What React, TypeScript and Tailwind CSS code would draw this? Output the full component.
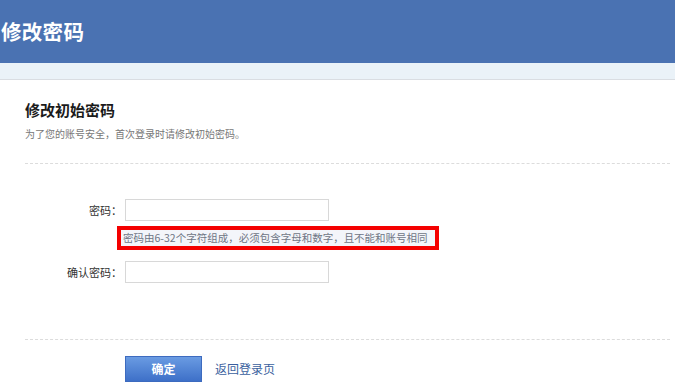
import React from "react";

const font = { fontFamily: '"Noto Sans CJK SC", "Noto Sans", sans-serif' };

export default function App() {
  return (
    <div className="w-[675px] h-[390px] overflow-hidden bg-white flex flex-col" style={font}>
      <div className="h-[63px] shrink-0 bg-[#4a72b2] flex items-center">
        <h1 className="text-[20.5px] font-bold text-white leading-none ml-[1px] tracking-[0.3px]">修改密码</h1>
      </div>
      <div className="h-[17px] shrink-0 bg-[#eaf2f8] border-b border-[#d9dde2]" />
      <div className="flex flex-col pl-[25px] pr-[5px]">
        <h2 className="mt-[20px] h-[20px] leading-[20px] text-[15px] font-bold text-[#1a1a1a]">修改初始密码</h2>
        <p className="mt-[6px] h-[16px] leading-[16px] text-[10px] text-[#777]">为了您的账号安全，首次登录时请修改初始密码。</p>
        <div className="mt-[21px] border-t border-dashed border-[#dcdcdc]" />
        <div className="mt-[35px] flex items-center">
          <label className="w-[100px] pr-[3px] text-right text-[11px] text-[#333]">密码：</label>
          <input type="password" className="w-[204px] h-[22px] border border-[#d8d8d8] outline-none" />
        </div>
        <div className="mt-[5px] ml-[92px] w-[322px] h-[24px] border-[4px] border-[#f40000] bg-[#f3f5fa] flex items-center pl-[2px]">
          <span className="text-[10.5px] text-[#6f7585] whitespace-nowrap leading-none">密码由6-32个字符组成，必须包含字母和数字，且不能和账号相同</span>
        </div>
        <div className="mt-[11px] flex items-center">
          <label className="w-[100px] pr-[3px] text-right text-[11px] text-[#333]">确认密码：</label>
          <input type="password" className="w-[204px] h-[22px] border border-[#d8d8d8] outline-none" />
        </div>
        <div className="mt-[56px] border-t border-dashed border-[#dcdcdc]" />
        <div className="mt-[16px] flex items-center">
          <button className="ml-[100px] w-[77px] h-[26px] bg-gradient-to-b from-[#6a9be2] to-[#3e70c8] border border-[#3d6bbf] text-white text-[12px] font-bold">确定</button>
          <a className="ml-[13px] text-[12px] text-[#3a5f9e]">返回登录页</a>
        </div>
      </div>
    </div>
  );
}
